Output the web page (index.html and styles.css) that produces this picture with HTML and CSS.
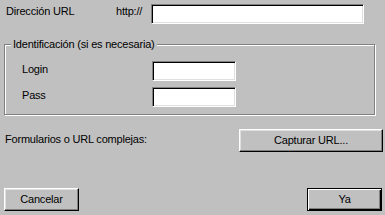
FILE: index.html
```html
<!DOCTYPE html>
<html>
<head>
<meta charset="utf-8">
<link rel="stylesheet" href="styles.css">
</head>
<body>
<div class="dialog">
  <div class="url-row">
    <span class="lbl lbl-dir">Dirección URL</span>
    <span class="lbl lbl-http">http://</span>
    <span class="field field-url"></span>
  </div>
  <div class="group">
    <span class="legend">Identificación (si es necesaria)</span>
    <div class="group-row">
      <span class="lbl lbl-group">Login</span>
      <span class="field field-small"></span>
    </div>
    <div class="group-row">
      <span class="lbl lbl-group">Pass</span>
      <span class="field field-small"></span>
    </div>
  </div>
  <div class="forms-row">
    <span class="lbl lbl-forms">Formularios o URL complejas:</span>
    <button class="btn btn-capture">Capturar URL...</button>
  </div>
  <div class="bottom-row">
    <button class="btn btn-small">Cancelar</button>
    <button class="btn btn-small btn-default">Ya</button>
  </div>
</div>
</body>
</html>
```
FILE: styles.css
```css
html, body {
  margin: 0;
  padding: 0;
  background: #c0c0c0;
}
.dialog {
  width: 385px;
  height: 215px;
  box-sizing: border-box;
  padding-top: 4px;
  background: #c0c0c0;
  font-family: "Liberation Sans", Arial, sans-serif;
  font-size: 11px;
  letter-spacing: -0.2px;
  line-height: 13px;
  color: #000;
  overflow: hidden;
}
.lbl {
  display: block;
  white-space: nowrap;
}
.url-row {
  display: flex;
  align-items: flex-start;
  height: 20px;
}
.lbl-dir {
  width: 110px;
  padding-left: 6px;
  padding-top: 1px;
}
.lbl-http {
  width: 35px;
  padding-top: 1px;
}
.field {
  display: block;
  box-sizing: border-box;
  background: #fff;
  border: 1px solid;
  border-color: #808080 #fff #fff #808080;
  box-shadow: inset 1px 1px 0 #000, inset -1px -1px 0 #dfdfdf;
}
.field-url {
  width: 213px;
  height: 20px;
}
.group {
  position: relative;
  box-sizing: border-box;
  margin-top: 20px;
  margin-left: 4px;
  width: 371px;
  height: 71px;
  border: 1px solid #808080;
  box-shadow: inset 1px 1px 0 #fff, 1px 1px 0 #fff;
  padding: 16px 0 0 17px;
  display: flex;
  flex-direction: column;
  gap: 6px;
}
.legend {
  position: absolute;
  left: 6px;
  top: -7px;
  padding: 0 2px;
  background: #c0c0c0;
  white-space: nowrap;
}
.group-row {
  display: flex;
  align-items: flex-start;
  height: 20px;
}
.lbl-group {
  width: 130px;
  padding-top: 2px;
}
.field-small {
  width: 84px;
  height: 20px;
}
.forms-row {
  display: flex;
  align-items: flex-start;
  margin-top: 14px;
  padding-left: 5px;
  padding-right: 2px;
  height: 23px;
}
.lbl-forms {
  padding-top: 4px;
}
.btn {
  display: block;
  box-sizing: border-box;
  margin: 0;
  padding: 0;
  font: inherit;
  letter-spacing: inherit;
  color: #000;
  background: #c0c0c0;
  border: 1px solid;
  border-color: #fff #000 #000 #fff;
  box-shadow: inset -1px -1px 0 #808080, inset 1px 1px 0 #dfdfdf;
  height: 23px;
  text-align: center;
}
.btn-capture {
  margin-left: auto;
  width: 144px;
}
.bottom-row {
  display: flex;
  justify-content: space-between;
  margin-top: 36px;
  padding-left: 4px;
  padding-right: 3px;
}
.btn-small {
  width: 75px;
}
.btn-default {
  border: 1px solid #000;
  box-shadow: inset 1px 1px 0 #fff, inset -1px -1px 0 #000, inset -2px -2px 0 #808080;
}
```
